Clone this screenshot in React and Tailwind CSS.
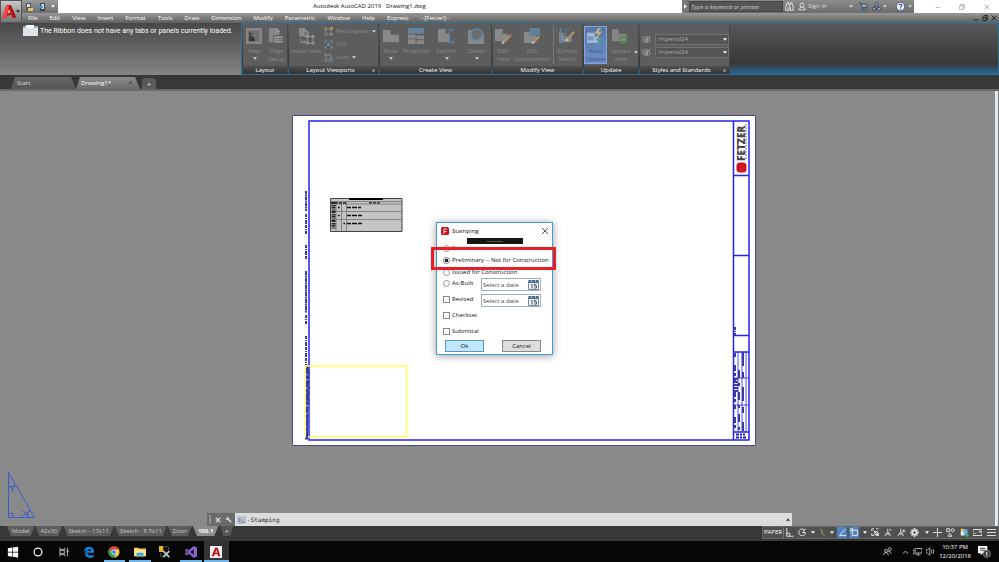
import React, { useState } from 'react';

const menus = [
  'File', 'Edit', 'View', 'Insert', 'Format', 'Tools', 'Draw', 'Dimension',
  'Modify', 'Parametric', 'Window', 'Help', 'Express', '--[Fetzer]--',
];

const layouts = ['Model', '42x30', 'Sketch - 17x11', 'Sketch - 8.5x11', 'Door', '100.1'];

const Caret = ({ className = 'text-gray-300' }) => (
  <svg viewBox="0 0 6 4" className={`w-[4px] h-[3px] shrink-0 ${className}`}>
    <path d="M0 0h6L3 4z" fill="currentColor" />
  </svg>
);

// Red Autodesk "A" used by the application button
const AutodeskLogo = ({ className }) => (
  <svg viewBox="0 0 16 16" className={className}>
    <path d="M0 15L5 0h5l6 14-4 1-1.500-4-4.500 1.500L5 15z" fill="#c4161c" />
    <path d="M5 0h3L4.500 15H0z" fill="#ef4a43" />
    <path d="M8 4.500L6.500 9.500l3-1z" fill="#d5d5d5" />
    <path d="M10 0l6 14-2 .6L8.500 1z" fill="#9d1216" />
  </svg>
);

const TitleBar = () => (
  <div className="flex h-[13px] bg-white text-[6px]">
    <div className="flex items-center gap-[5px] w-9 px-[3px] bg-gradient-to-b from-[#9a9a9a] to-[#6e6e6e]">
      <svg viewBox="0 0 8 8" className="w-[9px] h-2">
        <path d="M1 0h5v8H1z" fill="#555" />
        <path d="M2 1h3v3H2z" fill="#ddd" />
        <path d="M3 5h5v3H3z" fill="#e5c46a" />
      </svg>
      <svg viewBox="0 0 8 8" className="w-[9px] h-2">
        <path d="M2 0h5v8H2z" fill="#444" />
        <path d="M3 1h3v5H3z" fill="#ddd" />
        <path d="M0 3h3V1.500L5.500 4 3 6V5H0z" fill="#3d9be0" />
      </svg>
      <Caret className="text-white" />
    </div>
    <h1 className="flex-1 pl-[255px] leading-[13px] text-[#111] whitespace-pre">
      Autodesk AutoCAD 2019   Drawing1.dwg
    </h1>
    <div className="flex items-center w-[232px] bg-gradient-to-b from-[#8c8c8c] to-[#6c6c6c] text-[#ddd]">
      <button aria-label="Collapse search" className="flex items-center justify-center w-[7px] h-full bg-[#777]">
        <svg viewBox="0 0 4 6" className="w-[3px] h-[5px]"><path d="M0 0v6l4-3z" fill="#fff" /></svg>
      </button>
      <input
        aria-label="Search"
        placeholder="Type a keyword or phrase"
        className="w-[94px] h-[11px] px-[1px] bg-[#555] border border-[#444] italic placeholder:text-[#ccc] outline-none"
      />
      <button aria-label="Find" className="ml-[2px] w-[11px]">
        <svg viewBox="0 0 12 12" className="w-[9px] h-[9px]" fill="none" stroke="#e8e8e8" strokeWidth="1.300">
          <path d="M3 1h2v3h2V1h2l2 6v4H7V7H5v4H1V7z" />
        </svg>
      </button>
      <button className="flex items-center gap-[2px] ml-[2px]">
        <svg viewBox="0 0 12 12" className="w-[8px] h-[9px]" fill="none" stroke="#e8e8e8" strokeWidth="1.200">
          <circle cx="6" cy="4" r="3" />
          <path d="M1 11q0-3 4-3.500h2q4 .5 4 3.500z" />
        </svg>
        Sign In
      </button>
      <span className="flex-1" />
      <Caret />
      <button aria-label="Cart" className="ml-[6px]">
        <svg viewBox="0 0 12 12" className="w-[9px] h-[9px]" stroke="#26384f" fill="#9eb8d6">
          <path d="M0 1h2l2 6h6l1-4H3" />
          <circle cx="5" cy="10" r="1" /><circle cx="9" cy="10" r="1" />
        </svg>
      </button>
      <button aria-label="Apps" className="ml-1">
        <svg viewBox="0 0 12 12" className="w-[9px] h-[9px]" stroke="#26384f" fill="#9eb8d6">
          <path d="M6 3L2 9h8z" fill="none" />
          <circle cx="6" cy="3" r="2" /><circle cx="2.500" cy="9" r="2" /><circle cx="9.500" cy="9" r="2" />
        </svg>
      </button>
      <Caret className="ml-[2px] text-gray-300" />
      <button aria-label="Help" className="ml-[9px]">
        <svg viewBox="0 0 12 12" className="w-[9px] h-[9px]">
          <circle cx="6" cy="6" r="5.500" fill="#fff" stroke="#2d4a8a" />
          <path d="M4 4.500Q4 3 6 3t2 1.600Q8 5.500 6 6.600V7.500M6 8.500V10" fill="none" stroke="#1f3f9a" strokeWidth="1.400" />
        </svg>
      </button>
      <Caret className="ml-[3px] mr-[2px] text-gray-300" />
    </div>
    <div className="grid grid-cols-3 w-[85px] pl-3">
      {['M1 6h8', 'M1 3h6v6H1zM3 3V1h6v6H7', 'M1 1l8 8M9 1l-8 8'].map((d, i) => (
        <button key={d} aria-label={['Minimize', 'Restore', 'Close'][i]} className="flex items-center justify-center">
          <svg viewBox="0 0 10 10" className="w-[6px] h-[6px]" fill="none" stroke="#888"><path d={d} /></svg>
        </button>
      ))}
    </div>
  </div>
);

const MenuBar = () => (
  <div className="flex items-center h-[10px] pl-[6px] pr-[2px] bg-gradient-to-b from-[#999] to-[#5f5f5f] text-[6px] leading-[10px] text-white">
    <nav className="flex flex-1 gap-3">
      {menus.map((m) => <button key={m}>{m}</button>)}
    </nav>
    <div className="flex gap-[3px]">
      {['M1 8h8', 'M1 4h6v5H1zM3 4V1h6v6H7', 'M1 1l8 8M9 1l-8 8'].map((d, i) => (
        <button key={d} aria-label={['Minimize drawing', 'Restore drawing', 'Close drawing'][i]}>
          <svg viewBox="0 0 10 10" className="w-[6px] h-[6px]" fill="none" stroke="#1b1b1b" strokeWidth="1.500"><path d={d} /></svg>
        </button>
      ))}
    </div>
  </div>
);

const icons = {
  newLayout: <><path d="M0 0h17v17H0z" fill="#858585" /><path d="M3 3h11v11H3z" fill="#6b6b6b" /><path d="M3 3l8 11H3z" fill="#3c3c3c" /><path d="M10 3v11M3 8h11" stroke="#858585" strokeWidth=".6" /></>,
  pageSetup: <><path d="M1 0h8l3 3v12H1z" fill="#868686" /><path d="M9 0v4h4" fill="#a0a0a0" /><path d="M6 8h10v8H6z" fill="#999" stroke="#555" /><path d="M8 11h2M8 13h2M11 11h4M11 13h4" stroke="#555" /></>,
  insertView: <><path d="M1 0h6l3 3v6H1z" fill="#888" /><circle cx="8" cy="6" r="3" fill="#777" stroke="#999" /><path d="M3 11v4h5M6 13l2 2-2 1M10 9h6v7h-6zM9 8h2v2H9zM15 8h2v2h-2zM9 15h2v2H9zM15 15h2v2h-2z" fill="none" stroke="#999" /></>,
  base: <path d="M0 2h8v5h9v8H0z" fill="#888" />,
  projected: <><path d="M0 0h17v6H0z" fill="#65839a" /><path d="M0 7h8v4H0zM9 8h8v4H9zM0 12h8v5H0zM9 13h8v4H9z" fill="#898989" /></>,
  section: <><path d="M0 1h8v5h4v9H0z" fill="#888" /><path d="M12 0v17M12 2h5M12 15h5M15 0l2 2-2 2M15 13l2 2-2 2" fill="none" stroke="#5b89ab" /></>,
  detail: <><path d="M0 2h6v4h11v11H0z" fill="#888" /><circle cx="9" cy="7" r="6" fill="#6d6d6d" stroke="#5b89ab" strokeWidth="1.500" /></>,
  edit: <><path d="M0 1h8v5h5v8H0z" fill="#898989" /><path d="M8 14l7-7 2 2-7 7z" fill="#a4906a" /><path d="M7 17l1-3 2 2z" fill="#ddd" /><path d="M15 7l2 2 1-2-1-1z" fill="#a45e5a" /></>,
  editComponents: <><path d="M0 4h7v4h6v8H0z" fill="#898989" /><path d="M6 0h11v8H6z" fill="#5f8099" /><path d="M9 14l6-6 2 2-6 6z" fill="#a4906a" /><path d="M8 17l1-3 2 2z" fill="#ddd" /></>,
  symbol: <><path d="M0 5h5v4h8v6H0z" fill="#898989" /><path d="M2 0v17M0 2h4M0 14h5M7 1v10M7 1h3" stroke="#5b89ab" fill="none" /><path d="M8 11l7-8 2 2-7 8z" fill="#a4906a" /><path d="M7 14l1-3 2 2z" fill="#ddd" /></>,
  autoUpdate: <><path d="M0 5h8v4h4v7H0z" fill="#a3b6d4" /><path d="M1 9h6v4H1z" fill="#7993c0" /><path d="M12 0l-4 6h4l-2 5 6-7h-4l3-4z" fill="#c8b273" /><path d="M10 13a4 3 0 0 1 6-1M16 14a4 3 0 0 1-6 2" stroke="#4f9e90" strokeWidth="2" fill="none" /></>,
  updateView: <><path d="M0 1h7v5h8v8H0z" fill="#858585" /><path d="M8 12a4.500 4 0 0 1 8-1M16 13a4.500 4 0 0 1-8 1" stroke="#4c8a58" strokeWidth="2" fill="none" /></>,
};

const RibbonButton = ({ icon, label, width, drop, active }) => (
  <button
    disabled
    className={`flex flex-col items-center h-[38px] text-[6px] leading-[8px] text-center ${width} ${active ? 'bg-gradient-to-b from-[#5878ad] to-[#6c8dc4] border border-[#86a9dc] text-[#46557c] pt-px' : 'text-[#8a8a8a] pt-[2px]'}`}
  >
    <svg viewBox="0 0 18 18" className="w-[17px] h-[17px] shrink-0">{icons[icon]}</svg>
    <span className="mt-[2px] whitespace-pre">{label}</span>
    {drop && <Caret className="mt-[2px] text-gray-300" />}
  </button>
);

const Panel = ({ title, children, width, more }) => (
  <section className={`flex flex-col mr-[1px] bg-[#5d5d5d] border-r border-[#474747] ${width}`}>
    <div className="flex flex-1 pt-[2px]">{children}</div>
    <h2 className="flex items-center h-[8px] bg-gradient-to-b from-[#505050] to-[#333] text-[6px] leading-[8px] text-white">
      <span className="flex-1 text-center">{title}</span>
      {more && <span className="w-[6px]">»</span>}
    </h2>
  </section>
);

const StyleSelect = ({ label }) => (
  <label className="flex items-center gap-1">
    <svg viewBox="0 0 9 9" className="w-[9px] h-[9px]" aria-hidden="true">
      <path d="M0 1h4v6H0z" fill="#777" />
      <path d="M5 1v7M3 8l5-7" stroke="#96a6b2" fill="none" />
      <circle cx="6" cy="5" r="2" fill="none" stroke="#999" />
    </svg>
    <span className="grid grid-cols-1 items-center flex-1">
      <select
        disabled
        aria-label={label}
        className="col-start-1 row-start-1 w-full h-[11px] px-[2px] appearance-none bg-[#555] border border-[#717171] text-[6px] leading-[9px] text-[#aaa] opacity-100"
      >
        <option>Imperial24</option>
      </select>
      <Caret className="col-start-1 row-start-1 justify-self-end mr-[2px] text-white" />
    </span>
  </label>
);

const Ribbon = () => (
  <div className="flex h-[52px]">
    <div className="flex gap-[2px] w-[241px] pl-[23px] pt-[2px] bg-gradient-to-b from-[#484848] to-[#858585] text-white">
      <svg viewBox="0 0 15 11" className="w-[15px] h-[11px] shrink-0">
        <path d="M0 1h15v10H0z" fill="#dfe3ea" />
        <path d="M3 0h8v3H3z" fill="#fff" />
        <path d="M0 1h3v2H0zM11 1h4v2h-4z" fill="#a9afba" />
      </svg>
      <p className="leading-[13px] whitespace-nowrap text-[7px] font-['Roboto',sans-serif]">
        The Ribbon does not have any tabs or panels currently loaded.
      </p>
    </div>
    <div className="flex flex-1 pl-[1px] border border-[#2f6f97] bg-gradient-to-b from-[#585858] via-[#383838] via-80% to-[#1d6a9c]">
      <Panel title="Layout" width="w-[45px]">
        <RibbonButton icon="newLayout" label="New" width="w-[23px]" drop />
        <RibbonButton icon="pageSetup" label={'Page\nSetup'} width="w-[21px]" />
      </Panel>
      <Panel title="Layout Viewports" width="w-[90px]" more>
        <RibbonButton icon="insertView" label="Insert View" width="w-[35px]" />
        <div className="flex flex-col gap-[4px] pt-[1px] text-[6px] leading-[9px] text-[#8a8a8a]">
          {['Rectangular', 'Clip', 'Lock'].map((name) => (
            <button key={name} disabled className="flex items-center gap-[3px]">
              <svg viewBox="0 0 9 9" className="w-[9px] h-[9px]" fill="none" stroke="#8b8b8b">
                {name === 'Clip'
                  ? <path d="M1 3V1h2M6 1h2v2M8 6v2H6M3 8H1V6" />
                  : <path d="M2 2h5v5H2zM0 1h3M1 0v3M6 8h3M8 6v3M0 8h3" />}
                {name === 'Rectangular' && <path d="M6 0h3v3H6z" fill="#a98f58" stroke="none" />}
                {name === 'Clip' && <path d="M3 3h3v3H3z" fill="#5b89ab" stroke="none" />}
                {name === 'Lock' && <path d="M5 5h4v4H5z" fill="#567f95" stroke="none" />}
              </svg>
              {name}
              {name !== 'Clip' && <Caret />}
            </button>
          ))}
        </div>
      </Panel>
      <Panel title="Create View" width="w-[112px]">
        <RibbonButton icon="base" label="Base" width="w-[22px]" drop />
        <RibbonButton icon="projected" label="Projected" width="w-[28px]" />
        <RibbonButton icon="section" label="Section" width="w-[33px]" drop />
        <RibbonButton icon="detail" label="Detail" width="w-[27px]" drop />
      </Panel>
      <Panel title="Modify View" width="w-[90px]">
        <RibbonButton icon="edit" label={'Edit\nView'} width="w-[20px]" />
        <RibbonButton icon="editComponents" label={'Edit\nComponents'} width="w-[38px]" />
        <span className="w-px h-[38px] ml-[2px] bg-[#777]" />
        <RibbonButton icon="symbol" label={'Symbol\nSketch'} width="w-[27px]" />
      </Panel>
      <Panel title="Update" width="w-[55px]">
        <RibbonButton icon="autoUpdate" label={'Auto\nUpdate'} width="w-[23px]" active />
        <RibbonButton icon="updateView" label={'Update\nView'} width="w-[27px]" />
        <span className="self-end pb-[12px]"><Caret /></span>
      </Panel>
      <Panel title="Styles and Standards" width="w-[90px]" more>
        <div className="flex flex-col flex-1 gap-[2px] pt-[8px] pl-[2px]">
          <StyleSelect label="Section view style" />
          <StyleSelect label="Detail view style" />
        </div>
      </Panel>
    </div>
  </div>
);

const FileTabs = () => (
  <div className="flex items-end h-[16px] pl-[11px] bg-[#383838] border-b-2 border-[#6a6a6a] text-[6px] leading-[12px] text-[#ddd]">
    <button className="w-[65px] h-[12px] pl-[6px] text-left bg-gradient-to-b from-[#686868] to-[#555] [clip-path:polygon(0_100%,4px_0,60px_0,100%_100%)]">
      Start
    </button>
    <div className="flex items-center w-[64px] h-[12px] pl-[5px] pr-[7px] bg-gradient-to-b from-[#8a8a8a] to-[#6c6c6c] text-white [clip-path:polygon(0_100%,4px_0,59px_0,100%_100%)]">
      <button className="flex-1 text-left">Drawing1*</button>
      <button aria-label="Close tab" className="text-[#444]">✕</button>
    </div>
    <button aria-label="New tab" className="w-[14px] h-[11px] ml-[2px] rounded-t bg-[#5a5a5a] text-[8px] leading-[11px]">+</button>
  </div>
);

// Runs of rotated sheet notes, drawn too small to read
const Notes = ({ x, y1, y2, dash = '3 1 1 1 4 1', w = 2, color = '#3a3aa0' }) => (
  <path d={`M${x} ${y1}V${y2}`} stroke={color} strokeWidth={w} strokeDasharray={dash} />
);

const Sheet = () => (
  <svg viewBox="0 91 995 435" className="block w-full h-full">
    <path d="M292.500 115.500h463v330h-463z" fill="#fff" stroke="#4a4a80" />
    <path d="M309 121h440v319H309z" fill="none" stroke="#2323f0" strokeWidth="1.500" />
    <path d="M733.500 121v319M733 175.500h16M733 255.500h16M733 335.500h16M733 352h16M733 432h16" fill="none" stroke="#2323f0" strokeWidth="1.500" />
    <path d="M738 352v80M742 352v80M746 352v80M734 378h15M734 405h15" stroke="#2323f0" strokeWidth=".8" />
    <Notes x={735} y1={353} y2={431} dash="4 8 6 2 3 3" />
    <Notes x={739} y1={370} y2={431} dash="8 5 3 6" />
    <Notes x={743} y1={352} y2={431} dash="14 6 6 9" />
    <Notes x={735} y1={327} y2={335} />
    <Notes x={736} y1={378} y2={392} dash="2 1" w={4} />
    <path d="M736 434.500h9M736 437.500h11" stroke="#20209a" strokeWidth="2" strokeDasharray="3 1 2 1" />

    <Notes x={306} y1={191} y2={211} dash="3 .5 2 .5" />
    <Notes x={306} y1={214} y2={234} />
    <Notes x={306} y1={245} y2={259} />
    <Notes x={306} y1={271} y2={313} dash="4 .5 2 .5" />
    <Notes x={306} y1={315} y2={324} />
    <Notes x={306} y1={336} y2={365} />
    <Notes x={306.500} y1={366} y2={440} dash="5 .5 2 1" w={3} />
    <Notes x={308.500} y1={365} y2={404} dash="3 1 1 .5" />

    <path d="M305.500 366H406.500V437H305.500z" fill="none" stroke="#ffff60" strokeWidth="1.500" />
    <Notes x={307} y1={368} y2={438} dash="6 2 3 2" w={2} />

    <path d="M330.500 198.500h71.500v33h-71.500z" fill="#c4c4c4" stroke="#444" />
    <path d="M349 199h34" stroke="#000" strokeWidth="2" />
    <path d="M330 201.500h72M330 204h72M336 211.500h66M336 219.500h66M336 202v29M341.500 202v29M346.500 202v29" stroke="#666" strokeWidth=".7" />
    <path d="M331 203h15M369 202.800h11" stroke="#222" strokeWidth="1.300" strokeDasharray="3 1" />
    <path d="M333.500 202v27" stroke="#222" strokeWidth="4" strokeDasharray="2 1 1 .5" />
    <path d="M347 207.500h14M347 215.500h16M347 223.500h16" stroke="#111" strokeWidth="1.500" strokeDasharray="4 1 5 1" />
    <path d="M338 207.500h1.500M338 215.500h1.500M343.500 223.500h1.500" stroke="#000" strokeWidth="1.500" />

    <text transform="translate(744.500 161) rotate(-90)" fontSize="10" fontWeight="800" fill="#444" fontFamily="Open Sans, sans-serif">FETZER</text>
    <path d="M746 124v36" stroke="#777" strokeDasharray="2 1" />
    <rect x="736.500" y="162.500" width="10" height="10" rx="3.500" fill="#c9101c" />
    <path d="M739 165.500h5M739 168h5M739 170h5" stroke="#d33" strokeWidth=".7" />

    <path d="M8.500 472.500V517.500H34.500zM8.500 513.500h4v4M8.500 487q5 0 7-2M30 510q-3 3-3 7" fill="none" stroke="#3b5bd0" />
    <path d="M10 486l2.500 3 2.500-3M12.500 489v3M23 511l6 5M29 511l-6 5" fill="none" stroke="#3b5bd0" />
  </svg>
);

const DateField = ({ label }) => (
  <span className="flex items-center w-[60px] h-[13px] pr-[1px] border border-[#9fb2c4] bg-white">
    <input aria-label={label} placeholder="Select a date" className="w-full min-w-0 pl-[1px] outline-none placeholder:text-[#444]" />
    <button type="button" aria-label="Open calendar" className="shrink-0">
      <svg viewBox="0 0 11 10" className="w-[11px] h-[10px]">
        <path d="M.5.5h10v9H.5z" fill="#eef2f7" stroke="#7b8896" />
        <path d="M1 0h9v3H1z" fill="#46719b" />
        <path d="M3 1h1M7 1h1" stroke="#fff" />
        <path d="M3 4.500h1v4M8.500 4.500H6.500v1.500h2v2h-2.500" fill="none" stroke="#333" strokeWidth=".8" />
      </svg>
    </button>
  </span>
);

const boxClass = 'appearance-none shrink-0 w-[7px] h-[7px] border border-[#888] bg-white checked:bg-[#333]';
const radioClass = 'appearance-none shrink-0 w-[7px] h-[7px] rounded-full border border-[#999] bg-white checked:border-[#777] checked:bg-[radial-gradient(#222_40%,#fff_50%)]';

const StampingDialog = () => {
  const [stamp, setStamp] = useState('Preliminary -- Not for Construction');

  const radio = (name, height) => (
    <label className={`flex items-center gap-[2px] ${height}`}>
      <input type="radio" name="stamp" className={radioClass} checked={stamp === name} onChange={() => setStamp(name)} />
      {name}
    </label>
  );
  const check = (name) => (
    <label className="flex items-center gap-[2px] h-[10px]">
      <input type="checkbox" className={boxClass} />
      {name}
    </label>
  );

  return (
    <form
      role="dialog"
      aria-label="Stamping"
      className="absolute left-[436px] top-[131px] w-[117px] bg-white border border-[#3d9fd8] shadow-[0_1px_8px_rgba(0,0,0,0.4)] text-[6px] leading-[8px] text-[#111] whitespace-nowrap"
    >
      <header className="flex items-center gap-[3px] h-[15px] px-[4px]">
        <svg viewBox="0 0 8 8" className="w-[8px] h-[8px]">
          <rect width="8" height="8" rx="1.500" fill="#c4161c" />
          <path d="M3 7V2h3M3 4.500h2.500" fill="none" stroke="#fff" strokeWidth=".8" />
        </svg>
        <h2 className="flex-1">Stamping</h2>
        <button type="button" aria-label="Close">
          <svg viewBox="0 0 8 8" className="w-[6px] h-[6px]" stroke="#222"><path d="M0 0l8 8M8 0L0 8" /></svg>
        </button>
      </header>
      <div className="pt-[4px] pl-[6px] pr-[11px] pb-[2px]">
        {radio('None', 'h-[12px]')}
        {radio('Preliminary -- Not for Construction', 'h-[12px]')}
        {radio('Issued for Construction', 'h-[12px]')}
        <div className="flex justify-between items-start h-[16px]">
          {radio('As-Built', 'h-[10px]')}
          <DateField label="As-Built date" />
        </div>
        <div className="flex justify-between items-start h-[16px]">
          {check('Revised')}
          <DateField label="Revised date" />
        </div>
        <div className="h-[16px]">{check('Checkset')}</div>
        <div className="h-[14px]">{check('Submittal')}</div>
        <div className="flex justify-between pl-[2px]">
          <button type="button" className="w-[39px] h-[12px] bg-[#bee6fd] border border-[#5a97bd]">Ok</button>
          <button type="button" className="w-[39px] h-[12px] bg-[#ddd] border border-[#888]">Cancel</button>
        </div>
      </div>
      <div className="absolute left-[30px] top-[15px] flex items-center justify-center w-[56px] h-[6px] bg-[#191516]">
        <span className="w-4 h-px bg-[#555]" />
      </div>
      <div className="absolute left-[-6px] top-[24px] w-[125px] h-[23px] border-3 border-[#ed1c24] pointer-events-none" />
    </form>
  );
};

const CommandLine = () => (
  <div className="absolute inset-x-[207px] bottom-0 flex items-center h-[13px] bg-[#dcdcdc]">
    <div className="flex items-center justify-between w-[28px] h-full pl-[2px] pr-[3px] bg-[#6b6b6b]">
      <span className="w-[2px] h-[9px] bg-[#8f8f8f]" />
      <button aria-label="Close command line">
        <svg viewBox="0 0 8 8" className="w-[6px] h-[6px]" stroke="#ddd" strokeWidth="1.500"><path d="M1 1l6 6M7 1L1 7" /></svg>
      </button>
      <button aria-label="Customize">
        <svg viewBox="0 0 8 8" className="w-[7px] h-[7px]" stroke="#ddd" strokeWidth="1.800" fill="none"><path d="M7 7L3.500 3.500M1 3.500h2.500V1" /></svg>
      </button>
    </div>
    <svg viewBox="0 0 9 8" className="w-[9px] h-[8px] ml-[2px] shrink-0">
      <rect width="9" height="8" rx="1" fill="#b9c2cc" />
      <path d="M1.500 2l2 2-2 2M4.500 6h3" fill="none" stroke="#44566a" strokeWidth=".8" />
    </svg>
    <input
      aria-label="Command"
      defaultValue="-Stamping"
      className="flex-1 min-w-0 pl-px text-[6px] text-[#222] outline-none font-['DejaVu_Sans_Mono',monospace]"
    />
    <svg viewBox="0 0 6 4" className="w-[4px] h-[3px] mr-[2px] text-[#333]"><path d="M0 4h6L3 0z" fill="currentColor" /></svg>
  </div>
);

const statusItems = [
  { name: 'Ortho', w: 'w-[13px]', d: 'M1 0v11h9M1 7h4v4' },
  { name: 'Polar', w: 'w-[11px]', d: 'M9 3a4.500 4.500 0 1 0 1 3H6M6 6l4-5' },
  { caret: true },
  { name: 'Isodraft', w: 'w-[10px]', d: 'M3 1l6 10', color: '#b66', extra: 'M5 1v8' },
  { caret: true },
  { name: 'Snap tracking', w: 'w-[12px]', d: 'M10 1L2 10h9', on: true },
  { name: 'Object snap', w: 'w-[12px]', d: 'M3 3h7v7H3zM1 1h3v3H1z', on: true },
  { caret: true },
  { name: 'Selection cycling', w: 'w-[13px]', d: 'M1 1h3M7 1h3M1 1v3M1 7v3h3M10 7v3H7M3 3l6 6M5 5h4v4H5z' },
  { name: 'Annotation visibility', w: 'w-[13px]', d: 'M1 11l4-6 4 6M5 5V1M3 8h5M7 2l3 1' },
  { name: 'Auto scale', w: 'w-[12px]', d: 'M1 11l4-6 4 6M5 5V1M3 8h5M7 4h4M9 2v4' },
  { name: 'Workspace', w: 'w-[15px]', gear: true },
  { caret: true },
  { name: 'Monitor', w: 'w-[12px]', d: 'M6 0v12M0 6h12' },
  { name: 'Isolate', w: 'w-[15px]', d: 'M1 1h4v4H1zM7 3a2 2 0 1 0 4 0 2 2 0 1 0-4 0M3 11l2-4 3 4z' },
  { name: 'Hardware', w: 'w-[12px]', cube: true },
  { name: 'Clean screen', w: 'w-[15px]', d: 'M0 2h12v8H0zM2 8l2-2M10 4L8 6M8 4h2v2' },
  { name: 'Customization', w: 'w-[13px]', d: 'M0 2h12M0 6h12M0 10h12' },
];

const StatusBar = () => {
  const [layout, setLayout] = useState('100.1');

  return (
    <div className="flex h-[15px] bg-[#383838] text-[6px] text-[#ccc]">
      <nav className="flex flex-1 gap-px pl-[7px] leading-[10px]">
        {layouts.map((name) => (
          <button
            key={name}
            onClick={() => setLayout(name)}
            className={`h-[10px] px-[5px] [clip-path:polygon(0_0,100%_0,calc(100%-4px)_100%,4px_100%)] ${layout === name ? 'bg-[#8b8b8b] text-white font-bold' : 'bg-[#5d5d5d]'}`}
          >
            {name}
          </button>
        ))}
        <button aria-label="New layout" className="w-[13px] h-[10px] ml-px bg-[#555] text-[8px] leading-[10px] [clip-path:polygon(0_0,100%_0,calc(100%-3px)_100%,3px_100%)]">+</button>
      </nav>
      <div className="flex items-center h-[13px] bg-[#505050] border border-[#666]">
        <button className="w-[21px] h-full text-center leading-[11px] border-r border-[#777] text-white">PAPER</button>
        {statusItems.map((item, i) => item.caret ? (
          <button key={i} aria-label="More options" className="flex justify-center w-[9px]"><Caret className="text-white" /></button>
        ) : (
          <button key={i} aria-label={item.name} className={`flex items-center justify-center h-[11px] ${item.w} ${item.on ? 'bg-[#4f86c2] border-x border-[#505050]' : ''}`}>
            <svg viewBox="0 0 12 12" className="w-[9px] h-[9px] shrink-0" fill="none" stroke={item.color || '#e2e2e2'} strokeWidth="1.300">
              {item.d && <path d={item.d} />}
              {item.extra && <path d={item.extra} stroke="#5a5" />}
              {item.gear && <><circle cx="6" cy="6" r="3" strokeWidth="2.500" /><path d="M6 0v2M6 10v2M0 6h2M10 6h2M2 2l1 1M9 9l1 1M10 2L9 3M3 9l-1 1" strokeWidth="2" /></>}
              {item.cube && <><path d="M1 1h5v5H1z" fill="#eec84a" stroke="none" /><path d="M4 2h6v8H4z" fill="#6fb0e8" stroke="none" /><path d="M1 5h4v5H1z" fill="#eee" stroke="none" /><path d="M9 7v5M6.500 9.500h5" stroke="#3db54a" strokeWidth="2" /></>}
            </svg>
          </button>
        ))}
      </div>
    </div>
  );
};

const taskbarApps = [
  { name: 'Start', art: <path d="M1 2.500l5-.7v5H1zM6.700 1.700L13 .8v6H6.700zM1 7.500h5v5l-5-.7zM6.700 7.500H13v6l-6.300-.9z" fill="#fff" /> },
  { name: 'Cortana', art: <circle cx="7" cy="7" r="4.500" fill="none" stroke="#fff" strokeWidth="1.400" /> },
  { name: 'Task view', art: <path d="M2 2v2h6V2M2 12v-2h6v2M2 5.500h6v3H2zM11 2v10M10 6h3" fill="none" stroke="#ccc" /> },
  { name: 'Edge', art: <path d="M1 7Q2 1 7.500 1 13 1 13 8H5q0 3 4 3 2 0 3.500-1v2.500Q11 14 8 14 2.500 13.500 2.500 8.500 3 6 5 5 3 5 1 7zm4-1.200h4.500Q9.500 3.800 7.500 3.800 5.500 3.800 5 5.800z" fill="#1583dd" /> },
  { name: 'Chrome', open: true, art: <><circle cx="7" cy="7" r="6.500" fill="#f2c832" /><path d="M7 7L1.200 4A6.500 6.500 0 0 1 13 4H7z" fill="#db4437" /><path d="M7 7L1.200 4A6.500 6.500 0 0 0 7 13.500l2.500-5z" fill="#2e9e58" /><circle cx="7" cy="7" r="3" fill="#fff" /><circle cx="7" cy="7" r="2.300" fill="#4285f4" /></> },
  { name: 'Explorer', open: true, art: <><path d="M0 2h5l1 1h8v9H0z" fill="#f5cf68" /><path d="M1 5h12v7H1z" fill="#fbe39b" /><path d="M3 13V8h8v5H9v-2H5v2z" fill="#37a5de" /></> },
  { name: 'Tools', art: <><path d="M0 0h5v7H0z" fill="#e8b629" /><path d="M6 1h5v4M2 8v4h3" stroke="#456b38" fill="none" /><path d="M5 6l7 7M12 6l-7 7" stroke="#c7d0d8" strokeWidth="1.800" /></> },
  { name: 'Visual Studio', open: true, art: <path d="M10 0l4 1.500v11L10 14 4.500 9 2 11 .5 10.200V4L2 3.200 4.500 5zM10 4L6.500 7 10 10zM2 5.500v3L3.500 7z" fill="#865fc5" fillRule="evenodd" /> },
  { name: 'AutoCAD', open: true, active: true, art: <><path d="M0 0h14v14H0z" fill="#f3eded" /><path d="M2 12L6 2h3l3 10H9.500L9 9.500H5.500L4.500 12zM6 8h2.500L7.500 4.500z" fill="#b5121b" fillRule="evenodd" /></> },
];

const Taskbar = () => (
  <footer className="flex h-[21px] bg-[#060606] text-white">
    <nav className="grid grid-cols-9 w-[229px]">
      {taskbarApps.map((app) => (
        <button key={app.name} aria-label={app.name} className={`flex flex-col items-center ${app.active ? 'bg-[#333]' : 'px-[2px]'}`}>
          <svg viewBox="0 0 14 14" className="w-[12px] h-[12px] mt-[5px]">{app.art}</svg>
          {app.open && <span className="w-full h-[2px] mt-auto bg-[#70b5e8]" />}
        </button>
      ))}
    </nav>
    <span className="flex-1" />
    <div className="flex items-center gap-1 pr-[8px]">
      <svg viewBox="0 0 12 12" className="w-[9px] h-[9px] mr-[6px]" fill="none" stroke="#ddd">
        <circle cx="4" cy="5" r="2" /><circle cx="9" cy="3" r="2" /><path d="M1 11q0-4 3-4t3 4M7 6q3-1 4 3" />
      </svg>
      <svg viewBox="0 0 8 6" className="w-[7px] h-[6px]" fill="none" stroke="#ddd"><path d="M1 5l3-3 3 3" /></svg>
      <svg viewBox="0 0 12 12" className="w-[9px] h-[9px]" fill="none" stroke="#ddd"><path d="M2 2h10v6H4M7 8v2M4 10.500h6M0 4h3v5H0z" /></svg>
      <svg viewBox="0 0 12 12" className="w-[9px] h-[9px]" fill="none" stroke="#ddd"><path d="M0 4h2l3-3v10L2 8H0zM7 4q1.500 2 0 4M9 2.500q3 3.500 0 7" /></svg>
      <p className="text-[6px] leading-[9px] text-center whitespace-pre">{'10:37 PM\n12/20/2018'}</p>
      <button aria-label="Notifications" className="ml-[3px]">
        <svg viewBox="0 0 14 14" className="w-[13px] h-[13px]">
          <path d="M0 1h10v8H5l-2 2V9H0z" fill="#fff" />
          <path d="M2 3.500h6M2 5.500h6" stroke="#333" />
          <circle cx="9.500" cy="9.500" r="4" fill="#3a3a3a" stroke="#aaa" strokeWidth=".7" />
          <path d="M8.500 8.500l1-.8v4" stroke="#fff" fill="none" />
        </svg>
      </button>
    </div>
  </footer>
);

const App = () => (
  <div className="flex flex-col h-screen overflow-hidden bg-[#383838] font-['Open_Sans','Noto_Sans',sans-serif]">
    <header className="flex">
      <button aria-label="Application menu" className="flex items-center w-[22px] h-[23px] pl-[1px] bg-gradient-to-b from-[#c9c9c9] to-[#777] border border-[#555]">
        <AutodeskLogo className="w-[14px] h-[16px]" />
        <Caret className="text-[#222]" />
      </button>
      <div className="flex-1 min-w-0">
        <TitleBar />
        <MenuBar />
      </div>
    </header>
    <Ribbon />
    <FileTabs />
    <main className="relative flex flex-1 min-h-0 bg-[#898989]">
      <div className="flex-1 min-w-0"><Sheet /></div>
      <div className="w-[4px] bg-[#dfe7f0] border-r border-[#777]" />
      <CommandLine />
      <StampingDialog />
    </main>
    <StatusBar />
    <Taskbar />
  </div>
);

export default App;
